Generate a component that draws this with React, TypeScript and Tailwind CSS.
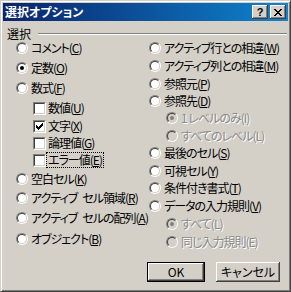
import type { ReactNode } from "react";

const FACE = "bg-[#d4d0c8]";

type Item = {
  kind: "radio" | "check";
  label: string;
  key?: string;
  checked?: boolean;
  disabled?: boolean;
  sub?: boolean;
  focused?: boolean;
  mt: string;
};

const leftItems: Item[] = [
  { kind: "radio", label: "コメント", key: "C", mt: "mt-0" },
  { kind: "radio", label: "定数", key: "O", checked: true, mt: "mt-[4px]" },
  { kind: "radio", label: "数式", key: "F", mt: "mt-[4px]" },
  { kind: "check", label: "数値", key: "U", sub: true, mt: "mt-[4px]" },
  { kind: "check", label: "文字", key: "X", sub: true, checked: true, mt: "mt-[2px]" },
  { kind: "check", label: "論理値", key: "G", sub: true, mt: "mt-[1px]" },
  { kind: "check", label: "エラー値", key: "E", sub: true, focused: true, mt: "mt-[1px]" },
  { kind: "radio", label: "空白セル", key: "K", mt: "mt-[3px]" },
  { kind: "radio", label: "アクティブ\u2002セル領域", key: "R", mt: "mt-[3px]" },
  { kind: "radio", label: "アクティブ\u2002セルの配列", key: "A", mt: "mt-[4px]" },
  { kind: "radio", label: "オブジェクト", key: "B", mt: "mt-[5px]" },
];

const rightItems: Item[] = [
  { kind: "radio", label: "アクティブ行との相違", key: "W", mt: "mt-0" },
  { kind: "radio", label: "アクティブ列との相違", key: "M", mt: "mt-[2px]" },
  { kind: "radio", label: "参照元", key: "P", mt: "mt-[2px]" },
  { kind: "radio", label: "参照先", key: "D", mt: "mt-[1px]" },
  { kind: "radio", label: "1 レベルのみ(I)", sub: true, disabled: true, checked: true, mt: "mt-[1px]" },
  { kind: "radio", label: "すべてのレベル(L)", sub: true, disabled: true, mt: "mt-[2px]" },
  { kind: "radio", label: "最後のセル", key: "S", mt: "mt-[1px]" },
  { kind: "radio", label: "可視セル", key: "Y", mt: "mt-[2px]" },
  { kind: "radio", label: "条件付き書式", key: "T", mt: "mt-[1px]" },
  { kind: "radio", label: "データの入力規則", key: "V", mt: "mt-[2px]" },
  { kind: "radio", label: "すべて(L)", sub: true, disabled: true, checked: true, mt: "mt-[2px]" },
  { kind: "radio", label: "同じ入力規則(E)", sub: true, disabled: true, mt: "mt-[2px]" },
];

function Radio({ checked, disabled }: { checked?: boolean; disabled?: boolean }) {
  return (
    <span className="inline-flex h-[12px] w-[12px] shrink-0 rounded-full border border-t-[#808080] border-l-[#808080] border-b-white border-r-white">
      <span
        className={`flex h-full w-full items-center justify-center rounded-full border border-t-[#404040] border-l-[#404040] border-b-[#d4d0c8] border-r-[#d4d0c8] ${
          disabled ? "bg-[#d4d0c8]" : "bg-white"
        }`}
      >
        {checked && (
          <span className={`h-[4px] w-[4px] rounded-full ${disabled ? "bg-[#808080]" : "bg-black"}`} />
        )}
      </span>
    </span>
  );
}

function CheckBox({ checked }: { checked?: boolean }) {
  const rows = [[6], [5, 6], [0, 4, 5, 6], [0, 1, 3, 4, 5], [0, 1, 2, 3, 4], [1, 2, 3], [2]];
  return (
    <span className="inline-flex h-[13px] w-[13px] shrink-0 border border-t-[#808080] border-l-[#808080] border-b-white border-r-white">
      <span className="flex h-full w-full items-center justify-center border border-t-[#404040] border-l-[#404040] border-b-[#d4d0c8] border-r-[#d4d0c8] bg-white">
        {checked && (
          <svg width="7" height="7" viewBox="0 0 7 7" shapeRendering="crispEdges">
            {rows.map((xs, y) => xs.map((x) => <rect key={`${x}-${y}`} x={x} y={y} width="1" height="1" fill="#000" />))}
          </svg>
        )}
      </span>
    </span>
  );
}

function Label({ item }: { item: Item }) {
  if (item.disabled) {
    return <span className="text-[#8a8a8a] [text-shadow:1px_1px_0_#fff]">{item.label}</span>;
  }
  const body: ReactNode = (
    <>
      {item.label}(<u className="underline-offset-1">{item.key}</u>)
    </>
  );
  if (item.focused) {
    return <span className="-ml-[2px] inline-block border border-dotted border-black px-[1px] py-[1px]">{body}</span>;
  }
  return <span>{body}</span>;
}

function Row({ item }: { item: Item }) {
  return (
    <div className={`flex h-[16px] items-center whitespace-nowrap ${item.mt} ${item.sub ? "pl-[17px]" : ""}`}>
      {item.kind === "radio" ? <Radio checked={item.checked} disabled={item.disabled} /> : <CheckBox checked={item.checked} />}
      <span className={item.kind === "radio" ? "ml-[3px]" : "ml-[2px]"}>
        <Label item={item} />
      </span>
    </div>
  );
}

const btn =
  "shadow-[inset_-1px_-1px_0_#404040,inset_1px_1px_0_#ffffff,inset_-2px_-2px_0_#808080,inset_2px_2px_0_#d4d0c8]";

export default function App() {
  return (
    <div
      className={`h-[292px] w-[291px] overflow-hidden border border-t-[#d4d0c8] border-l-[#d4d0c8] border-b-[#404040] border-r-[#404040] p-[2px] ${FACE} shadow-[inset_1px_1px_0_#ffffff,inset_-1px_-1px_0_#808080] font-['Noto_Sans_CJK_JP',sans-serif] text-[12px] leading-none text-black [font-feature-settings:'palt']`}
    >
      {/* title bar */}
      <div className="flex h-[18px] items-center bg-gradient-to-r from-[#0a246a] to-[#1084d0] pl-[2px] pr-[2px]">
        <span className="flex-1 text-[12px] font-bold text-white">選択オプション</span>
        <span className={`flex h-[14px] w-[16px] items-center justify-center ${FACE} ${btn}`}>
          <span className="font-['Liberation_Sans',sans-serif] text-[11px] font-bold leading-none">?</span>
        </span>
        <span className={`ml-[2px] flex h-[14px] w-[16px] items-center justify-center ${FACE} ${btn}`}>
          <svg width="8" height="7" viewBox="0 0 8 7" shapeRendering="crispEdges">
            {[0, 1, 2, 3, 4, 5, 6].map((i) => (
              <g key={i}>
                <rect x={i} y={i} width="2" height="1" fill="#000" />
                <rect x={6 - i} y={i} width="2" height="1" fill="#000" />
              </g>
            ))}
          </svg>
        </span>
      </div>

      {/* body */}
      <div className="flex flex-col pt-[7px]">
        <div className="flex h-[12px] items-center pl-[4px] pr-[1px]">
          <span>選択</span>
          <span className="ml-[7px] h-[2px] flex-1 border-t border-b border-t-[#808080] border-b-white" />
        </div>

        <div className="flex items-start tracking-[-1px]">
          <div className="flex w-[146px] shrink-0 flex-col pl-[13px]">
            {leftItems.map((it) => (
              <Row key={it.label} item={it} />
            ))}
          </div>
          <div className="flex min-w-0 flex-col">
            {rightItems.map((it) => (
              <Row key={it.label} item={it} />
            ))}
          </div>
        </div>

        <div className="mt-[12px] flex justify-end gap-[11px] pr-[8px]">
          <span className="flex h-[20px] w-[58px] border border-black">
            <span className={`flex flex-1 items-center justify-center ${btn}`}>OK</span>
          </span>
          <span className={`flex h-[20px] w-[64px] items-center justify-center ${btn}`}>キャンセル</span>
        </div>
      </div>
    </div>
  );
}
